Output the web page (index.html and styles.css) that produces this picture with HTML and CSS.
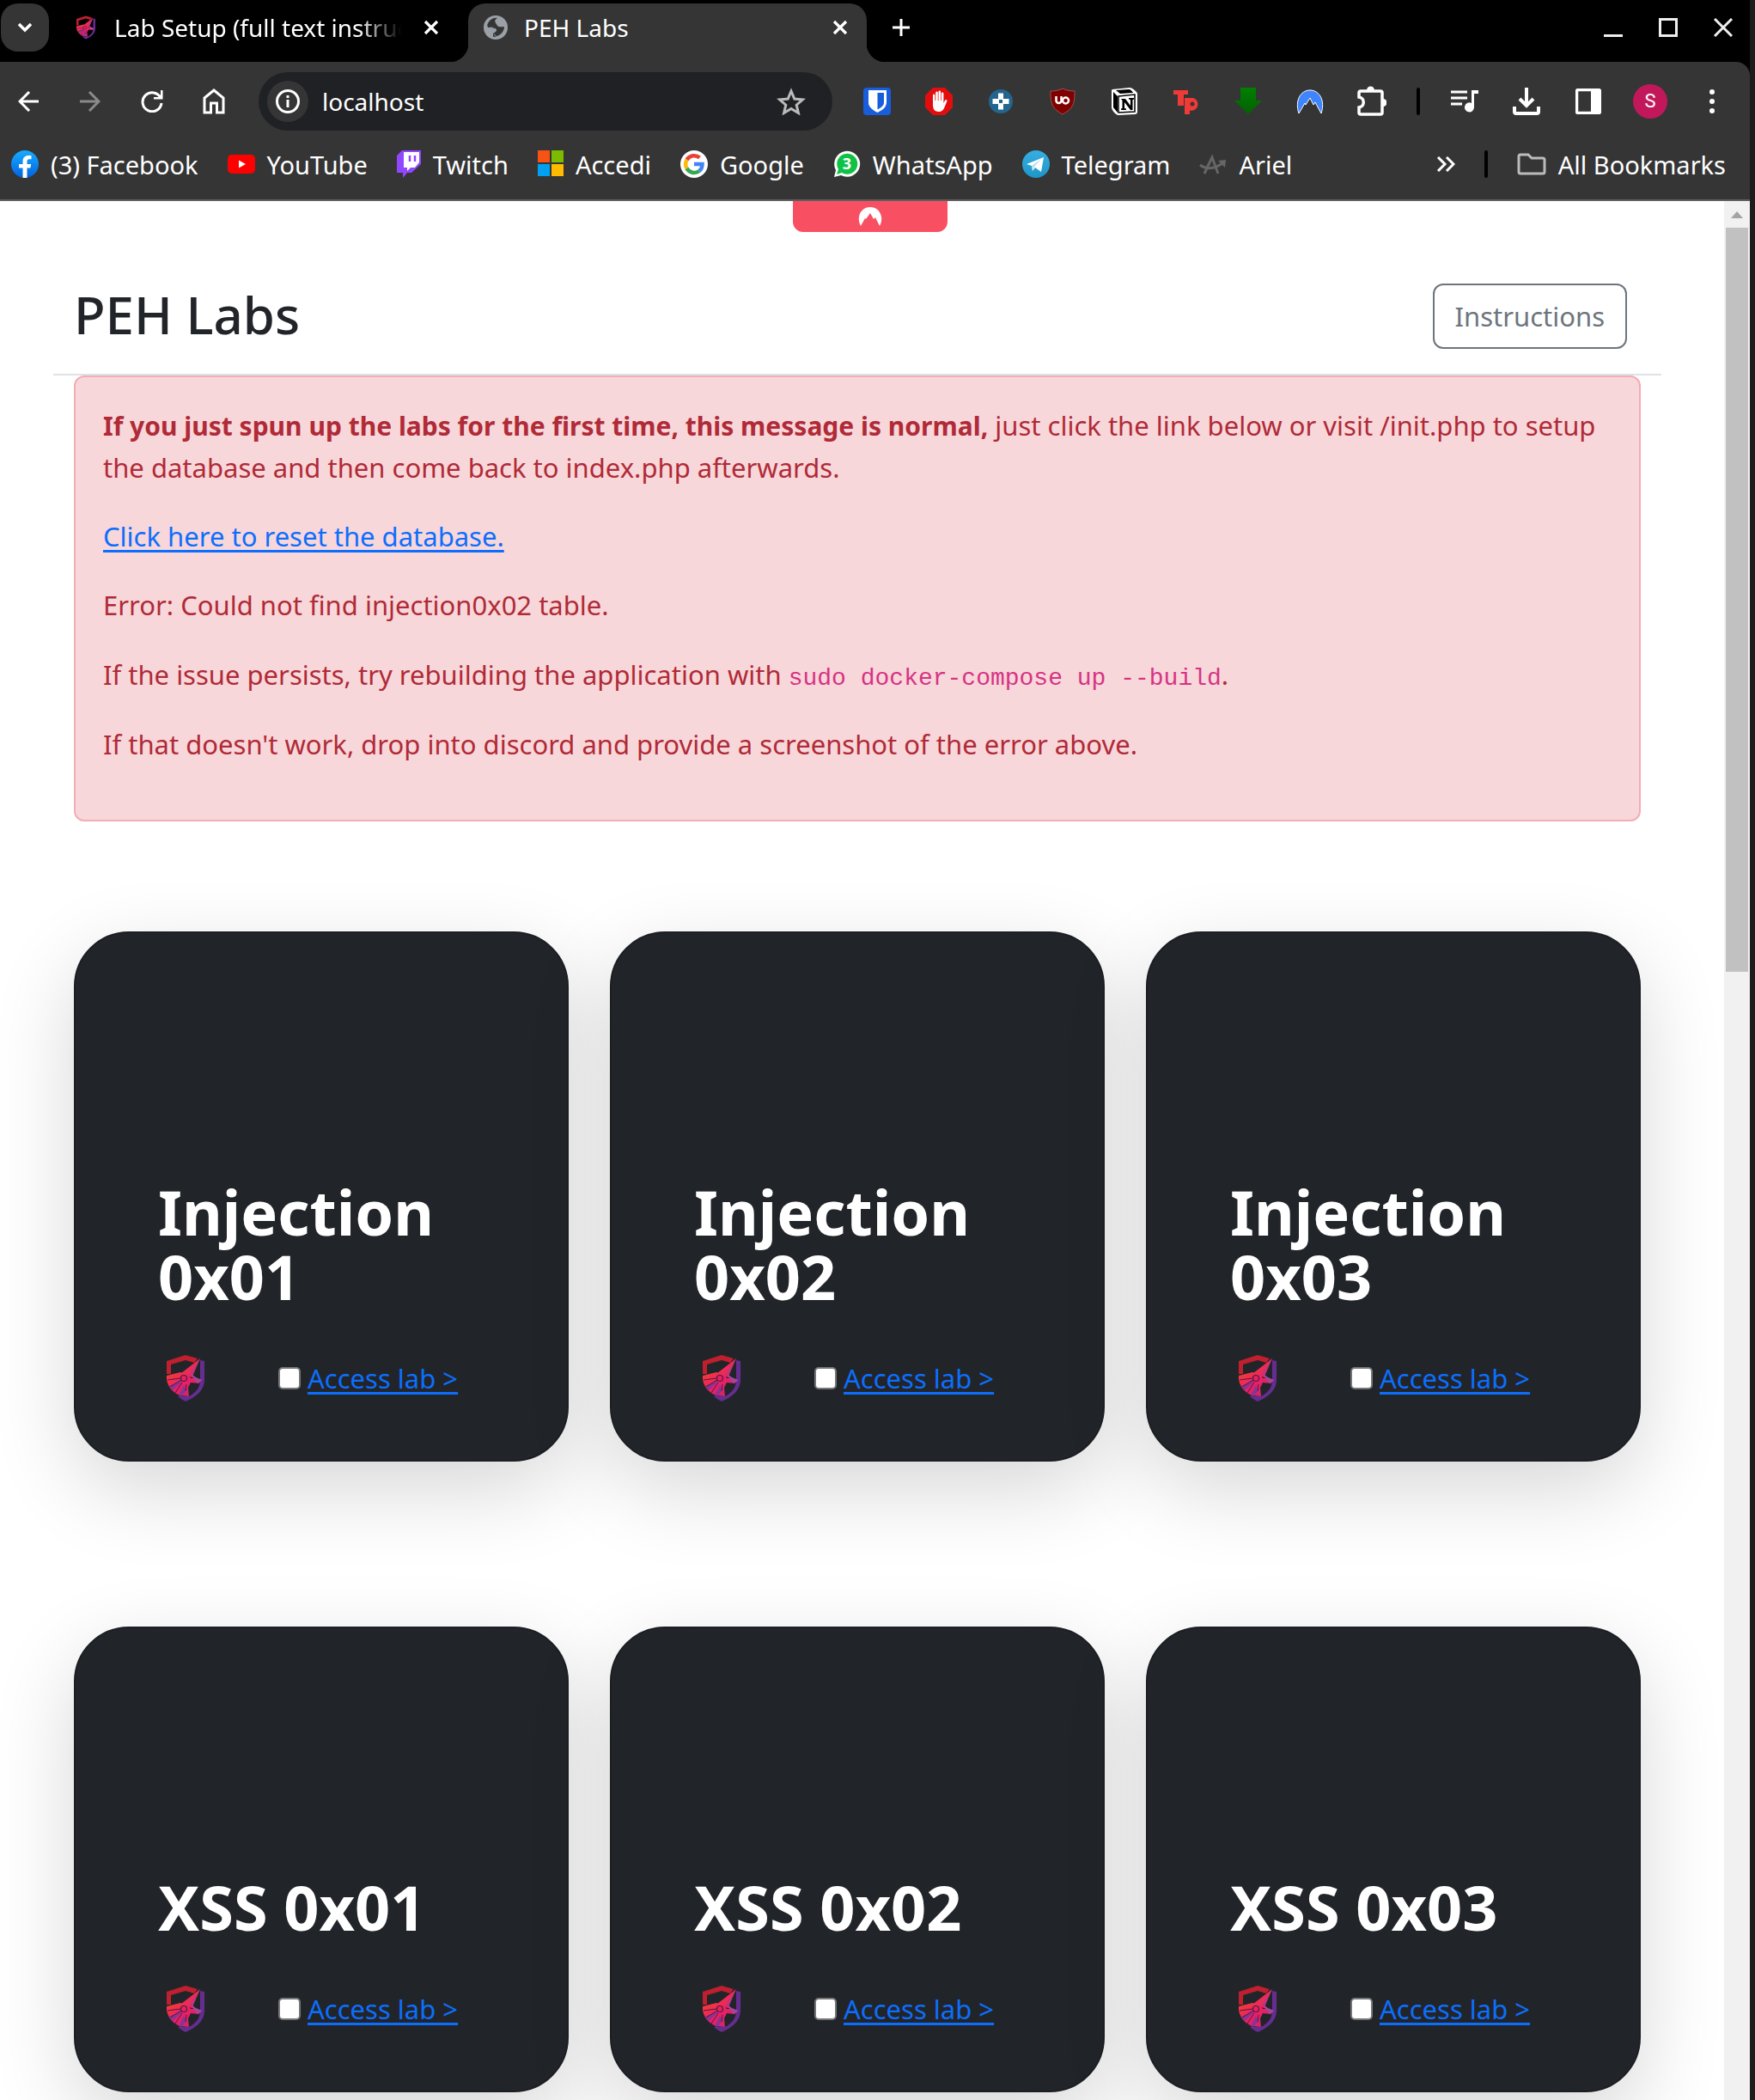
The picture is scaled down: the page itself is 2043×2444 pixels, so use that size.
FILE: index.html
```html
<!DOCTYPE html>
<html lang="en">
<head>
<meta charset="utf-8">
<title>PEH Labs</title>
<link rel="stylesheet" href="styles.css">
</head>
<body>
<svg class="defs" aria-hidden="true">
  <defs>
    <linearGradient id="head" x1="0" y1="0" x2="1" y2="1">
      <stop offset="0" stop-color="#f5402f"/><stop offset=".45" stop-color="#ec1f64"/><stop offset="1" stop-color="#c02a6b"/>
    </linearGradient>
    <linearGradient id="fb" x1="0" y1="0" x2="0" y2="1"><stop offset="0" stop-color="#18acfe"/><stop offset="1" stop-color="#0163e0"/></linearGradient>
    <linearGradient id="tg" x1="0" y1="0" x2="0" y2="1"><stop offset="0" stop-color="#37aee2"/><stop offset="1" stop-color="#1e96c8"/></linearGradient>
    <linearGradient id="dl" x1="0" y1="0" x2="0" y2="1"><stop offset="0" stop-color="#008000"/><stop offset="1" stop-color="#046004"/></linearGradient>
    <symbol id="shield" viewBox="0 0 44 54">
      <path d="M0 22V7L22 0l14 4-4 5-10-3L5 11v11z" fill="#c01f2e"/>
      <path d="M39 6l5 1v22c0 12-10 20-22 25-4-2-7-4-9-6l13 0c8-4 13-10 13-19z" fill="#662d91"/>
      <path d="M39 4L30 25l-4 0-6-3z" fill="#c2347a"/>
      <path d="M39 4L17 21l7 4z" fill="#ef2a55"/>
      <path d="M0 24l16-4 12 3 5 3 8 3-4 4-9-1-3 6 1 10-11-1C6 43 1 36 0 28z" fill="url(#head)"/>
      <path d="M30 23l4 3 7 3-4 4-7-7z" fill="#a0489c"/>
      <path d="M17 30L3 36l4 5 11-10zM20 35l-6 12 3 1 6-7z" fill="#8b3391"/>
      <path d="M1 29l15-2M4 37l13-8M10 44l8-12M22 42l1-8" stroke="#4a1c48" fill="none"/>
      <circle cx="20" cy="27" r="3.500" fill="#e5245c" stroke="#4a1c48" stroke-width="1.200"/>
      <path d="M27 25l5 2-4 0z" fill="#212429"/>
    </symbol>
    <symbol id="close" viewBox="0 0 18 18"><path d="M2 2l14 14M16 2L2 16" stroke="#fff" stroke-width="3.200"/></symbol>
  </defs>
</svg>
<div class="window">
  <div class="tabstrip">
    <button class="tab-search" aria-label="Search tabs"><svg width="20" height="14" viewBox="0 0 20 14"><path d="M3 3l7 7 7-7" fill="none" stroke="#fff" stroke-width="3.500"/></svg></button>
    <div class="tab">
      <svg class="favicon" width="22" height="28"><use href="#shield"/></svg>
      <span class="tab-title fade">Lab Setup (full text instructions)</span>
      <button class="plain" aria-label="Close tab"><svg width="18" height="18"><use href="#close"/></svg></button>
    </div>
    <div class="tab active">
      <svg class="globe" width="28" height="28" viewBox="0 0 28 28"><circle cx="14" cy="14" r="14" fill="#9aa0a6"/><path d="M16 3c-2 1-4 3-3 5s2 2 3 4c2 2 5 1 8 1 0 6-5 11-10 11 0-2-2-2-2-3 1-1 3-2 3-4-1-3-3-3-6-4-2 0-4 0-5-1 1-5 6-10 12-9z" fill="#353535"/><path d="M5 12c2-3 5-7 9-8-1 2-1 3 0 5 1 1 1 2 0 3-2 1-4 0-5 1 2 1 6 1 7 4 0 2-2 3-4 4 0 2 1 3 3 4-7 1-12-6-10-13z" fill="#353535"/><path d="M3 14c3 0 6-1 9 1 3 0 4 2 2 4l-3 2v4C6 24 2 19 3 14z" fill="#9aa0a6"/></svg>
      <span class="tab-title">PEH Labs</span>
      <button class="plain" aria-label="Close tab"><svg width="18" height="18"><use href="#close"/></svg></button>
    </div>
    <button class="plain new-tab" aria-label="New tab"><svg width="20" height="20" viewBox="0 0 20 20"><path d="M10 0v20M0 10h20" stroke="#fff" stroke-width="3"/></svg></button>
    <div class="controls">
      <button class="plain" aria-label="Minimize"><svg width="22" height="22" viewBox="0 0 22 22"><path d="M0 20.500h22" stroke="#eee" stroke-width="3"/></svg></button>
      <button class="plain" aria-label="Maximize"><svg width="22" height="22" viewBox="0 0 22 22"><path d="M1.500 1.500h19v19h-19z" fill="none" stroke="#eee" stroke-width="3"/></svg></button>
      <button class="plain" aria-label="Close"><svg width="22" height="22" viewBox="0 0 22 22"><path d="M1 1l20 20M21 1L1 21" stroke="#eee" stroke-width="3"/></svg></button>
    </div>
  </div>

  <div class="toolbar">
    <div class="slots">
      <button class="slot" aria-label="Back"><svg width="24" height="24" viewBox="0 0 24 24"><path d="M24 12H2M13 1L2 12l11 11" fill="none" stroke="#fff" stroke-width="3"/></svg></button>
      <button class="slot" aria-label="Forward"><svg width="24" height="24" viewBox="0 0 24 24"><path d="M0 12h22M11 1l11 11-11 11" fill="none" stroke="#8a8a8a" stroke-width="3"/></svg></button>
      <button class="slot" aria-label="Reload"><svg width="26" height="26" viewBox="0 0 26 26"><path d="M23 9A11 11 0 1 0 24 15" fill="none" stroke="#fff" stroke-width="3"/><path d="M25.500 0v10.500H15V8h6l2-3V0z" fill="#fff"/></svg></button>
      <button class="slot" aria-label="Home"><svg width="26" height="30" viewBox="0 0 26 30"><path d="M2 28V11l11-9 11 9v17h-7.500V17h-7v11z" fill="none" stroke="#fff" stroke-width="3"/></svg></button>
    </div>
    <div class="omnibox">
      <span class="info"><svg width="28" height="28" viewBox="0 0 28 28"><circle cx="14" cy="14" r="12.500" fill="none" stroke="#fff" stroke-width="3"/><path d="M14 12v9M14 7v3" stroke="#fff" stroke-width="3"/></svg></span>
      <input class="url" type="text" value="localhost" aria-label="Address">
      <button class="plain star" aria-label="Bookmark this tab"><svg width="34" height="32" viewBox="0 0 34 32"><path d="M17 4l3.800 9 9.700.9-7.300 6.300 2.200 9.300L17 24.500l-8.400 5 2.200-9.300L3.500 13.900l9.700-.9z" fill="none" stroke="#bbb" stroke-width="3"/></svg></button>
    </div>
    <div class="slots">
      <button class="slot" aria-label="Bitwarden"><svg width="32" height="32" viewBox="0 0 32 32"><rect width="32" height="32" rx="4" fill="#175ddc"/><path d="M6 3h21v14c0 6-5 9-10.500 12C11 26 6 23 6 17z" fill="#fff"/><path d="M16.500 6H24v11c0 4-3 6-7.500 8.500z" fill="#175ddc"/></svg></button>
      <button class="slot" aria-label="AdBlock"><svg width="32" height="32" viewBox="0 0 32 32"><path d="M9 0h14l9 9v14l-9 9H9l-9-9V9z" fill="#e40d0d"/><path d="M9 9c0-2 2.400-2 2.400 0v6h.8V6c0-2 2.600-2 2.600 0v9h.7V5c0-2 2.600-2 2.600 0v10h.7V7c0-2 2.600-2 2.600 0v11l1.600-3c1-2 3-1 2.300 1L22 24c-1 2-3 4-6 4-5 0-7-3-7-8z" fill="#fff"/></svg></button>
      <button class="slot" aria-label="Extension"><svg width="28" height="28" viewBox="0 0 28 28"><circle cx="14" cy="14" r="14" fill="#23658f"/><path d="M11 4.500h6V11h6.500v6H17v6.500h-6V17H4.500v-6H11z" fill="#fff"/><path d="M12 12h4v4h-4z" fill="#23658f"/></svg></button>
      <button class="slot" aria-label="uBlock Origin"><svg width="30" height="32" viewBox="0 0 30 32"><path d="M15 1c4 2 8 3 14 3 0 14-1 20-14 27C2 24 1 18 1 4c6 0 10-1 14-3z" fill="#800000" stroke="#a05050"/><path d="M7.500 10v5a3 3 0 0 0 6 0v-5" fill="none" stroke="#fff" stroke-width="2.500"/><circle cx="18.500" cy="15" r="3.500" fill="none" stroke="#fff" stroke-width="2.500"/></svg></button>
      <button class="slot" aria-label="Notion"><svg width="32" height="32" viewBox="0 0 32 32"><path d="M2 2l20-2c3 0 9 5 9 7v21c0 2-1 3-3 3L9 32c-3 0-8-6-8-9V4c0-1 0-2 1-2z" fill="#fff"/><path d="M3 5l5 5v19l-5-6zM6 3l15-1c2 0 4 2 5 4l-15 1z" fill="#000"/><path d="M9 10l19-2v20L9 29z" fill="#fff" stroke="#000" stroke-width="1.500"/><path d="M12 13h5l6 8v-7l-2-.5V12h6v1.500l-1.500.5v12H23l-7-9v7l2 .5V26h-6v-1.500l1.500-.5v-9z" fill="#000"/></svg></button>
      <button class="slot" aria-label="Tp"><svg width="32" height="32" viewBox="0 0 32 32"><path d="M1 3h17v5h-5v13H6V8H1z" fill="#f03a37"/><path d="M14 12h10a7.500 7.500 0 1 1-4 14.500V31h-6z" fill="#f03a37"/><circle cx="23" cy="19" r="2.500" fill="#353535"/></svg></button>
      <button class="slot" aria-label="Downloader"><svg width="32" height="32" viewBox="0 0 32 32"><path d="M7 0h18v15h7L16 31 0 15h7z" fill="url(#dl)"/></svg></button>
      <button class="slot" aria-label="NordVPN"><svg width="32" height="30" viewBox="0 0 32 30"><path d="M3 29C-2 14 5 2 16 2s18 12 13 27l-7-13-2 3-4-8-5 8-1-2z" fill="#3e85ff" stroke="#fff" stroke-width="1"/></svg></button>
      <button class="slot" aria-label="Extensions"><svg width="34" height="36" viewBox="0 0 34 36"><path d="M4 6h23q2 0 2 2v23q0 2-2 2H4q-2 0-2-2v-6c7-1 7-11 0-12V8q0-2 2-2z" fill="none" stroke="#fff" stroke-width="3.500"/><path d="M11 5a4.500 4.500 0 0 1 9 0zM30 15a4.500 4.500 0 0 1 0 9z" fill="#fff"/></svg></button>
    </div>
    <span class="bar"></span>
    <div class="slots">
      <button class="slot" aria-label="Media"><svg width="32" height="26" viewBox="0 0 32 26"><path d="M0 2h19M0 9h19M0 16h13" stroke="#fff" stroke-width="3"/><path d="M32 0v4h-5v16a5.500 5.500 0 1 1-3-5V0z" fill="#fff"/></svg></button>
      <button class="slot" aria-label="Downloads"><svg width="32" height="32" viewBox="0 0 32 32"><path d="M16 0v20M8 13l8 8 8-8" fill="none" stroke="#fff" stroke-width="4"/><path d="M2 22v6q0 2 2 2h24q2 0 2-2v-6" fill="none" stroke="#fff" stroke-width="4"/></svg></button>
      <button class="slot" aria-label="Side panel"><svg width="30" height="30" viewBox="0 0 30 30"><rect x="1.500" y="1.500" width="27" height="27" rx="2" fill="none" stroke="#fff" stroke-width="3.500"/><path d="M18 1h11v28H18z" fill="#fff"/></svg></button>
      <button class="slot" aria-label="Profile"><span class="avatar">S</span></button>
      <button class="slot" aria-label="Menu"><svg width="8" height="28" viewBox="0 0 8 28"><circle cx="4" cy="3" r="3" fill="#fff"/><circle cx="4" cy="14" r="3" fill="#fff"/><circle cx="4" cy="25" r="3" fill="#fff"/></svg></button>
    </div>
  </div>

  <nav class="bookmarks">
    <a href="#"><svg width="32" height="32" viewBox="0 0 32 32"><circle cx="16" cy="16" r="16" fill="url(#fb)"/><path d="M13.500 32V20.500H9V16h4.500v-3c0-5 3-7 6.500-7 1.500 0 2.500.2 3.500.3v4H21c-2 0-2.500 1-2.500 2.700v3h4.700l-.8 4.500h-3.900V32z" fill="#fff"/></svg>(3) Facebook</a>
    <a href="#"><svg width="32" height="32" viewBox="0 0 32 32"><rect y="5" width="32" height="22" rx="5" fill="#f00"/><path d="M13 11.500l8 4.500-8 4.500z" fill="#fff"/></svg>YouTube</a>
    <a href="#"><svg width="28" height="32" viewBox="2 0 28 32"><path d="M2 6l6-6h22v16L19 26h-5l-5 6v-6H2z" fill="#9146ff"/><path d="M10 2h18v12l-5 6h-5l-4 4v-4h-4z" fill="#fff"/><path d="M17 6v7M23 6v7" stroke="#9146ff" stroke-width="2.500"/></svg>Twitch</a>
    <a href="#"><svg width="30" height="32" viewBox="1 0 30 32"><path d="M1 0h14v14H1z" fill="#f65314"/><path d="M17 0h14v14H17z" fill="#7cbb00"/><path d="M1 16h14v14H1z" fill="#00a1f1"/><path d="M17 16h14v14H17z" fill="#fb0"/></svg>Accedi</a>
    <a href="#"><svg width="32" height="32" viewBox="0 0 32 32"><circle cx="16" cy="16" r="16" fill="#fff"/><g fill="none" stroke-width="4.500"><path d="M22.500 8.500A10 10 0 0 0 7.500 11" stroke="#ea4335"/><path d="M7.500 11a10 10 0 0 0 0 10" stroke="#fbbc05"/><path d="M7.500 21a10 10 0 0 0 14.500 3" stroke="#34a853"/><path d="M16 16h9.500c0 3-1 6-3.500 8" stroke="#4285f4"/></g></svg>Google</a>
    <a href="#"><svg width="32" height="32" viewBox="0 0 32 32"><path d="M1 31l2-8A15 15 0 1 1 9 29z" fill="#fff"/><path d="M4 28l2-6a12 12 0 1 1 4 4z" fill="#0fc144"/><text x="16" y="22" class="badge" text-anchor="middle">3</text></svg>WhatsApp</a>
    <a href="#"><svg width="32" height="32" viewBox="0 0 32 32"><circle cx="16" cy="16" r="16" fill="url(#tg)"/><path d="M5 16L25 8l-3 17-7-5-3 4-1-6z" fill="#fff"/><path d="M11 18l11-8-8 9-2 4z" fill="#b8dcf0"/></svg>Telegram</a>
    <a href="#"><svg width="32" height="32" viewBox="0 0 32 32"><path d="M6 27l9-19 7 19M1 17c8 6 18 4 26-2" fill="none" stroke="#666" stroke-width="3"/><path d="M22 12l9-1-1 9z" fill="#666"/></svg>Ariel</a>
    <button class="plain more" aria-label="More bookmarks"><svg width="22" height="18" viewBox="0 0 22 18"><path d="M2 1l8 8-8 8M12 1l8 8-8 8" fill="none" stroke="#fff" stroke-width="3"/></svg></button>
    <span class="bar"></span>
    <a href="#"><svg width="34" height="32" viewBox="0 0 34 32"><path d="M4 5h9l4 4h13q2 0 2 2v14q0 2-2 2H4q-2 0-2-2V7q0-2 2-2z" fill="none" stroke="#bbb" stroke-width="3"/></svg>All Bookmarks</a>
  </nav>

  <div class="viewport">
    <div class="page">
      <span class="nord"><svg width="28" height="22" viewBox="0 0 28 22"><path d="M3 22C-3 11 4 0 14 0s17 11 11 22l-5-10-2 2-4-7-5 7-1-1z" fill="#fff"/></svg></span>
      <header class="head">
        <h1>PEH Labs</h1>
        <button class="instructions">Instructions</button>
      </header>
      <div class="content">
        <div class="alert" role="alert">
          <p><strong>If you just spun up the labs for the first time, this message is normal,</strong> just click the link below or visit /init.php to setup the database and then come back to index.php afterwards.</p>
          <p><a href="#">Click here to reset the database.</a></p>
          <p>Error: Could not find injection0x02 table.</p>
          <p class="rebuild">If the issue persists, try rebuilding the application with <code>sudo docker-compose up --build</code>.</p>
          <p>If that doesn't work, drop into discord and provide a screenshot of the error above.</p>
        </div>
        <div class="cards">
          <article class="card"><h2>Injection<br>0x01</h2><div class="foot"><svg width="44" height="54"><use href="#shield"/></svg><input type="checkbox" aria-label="Injection 0x01 done"><a href="#">Access lab &gt;</a></div></article>
          <article class="card"><h2>Injection<br>0x02</h2><div class="foot"><svg width="44" height="54"><use href="#shield"/></svg><input type="checkbox" aria-label="Injection 0x02 done"><a href="#">Access lab &gt;</a></div></article>
          <article class="card"><h2>Injection<br>0x03</h2><div class="foot"><svg width="44" height="54"><use href="#shield"/></svg><input type="checkbox" aria-label="Injection 0x03 done"><a href="#">Access lab &gt;</a></div></article>
          <article class="card"><h2>XSS 0x01</h2><div class="foot"><svg width="44" height="54"><use href="#shield"/></svg><input type="checkbox" aria-label="XSS 0x01 done"><a href="#">Access lab &gt;</a></div></article>
          <article class="card"><h2>XSS 0x02</h2><div class="foot"><svg width="44" height="54"><use href="#shield"/></svg><input type="checkbox" aria-label="XSS 0x02 done"><a href="#">Access lab &gt;</a></div></article>
          <article class="card"><h2>XSS 0x03</h2><div class="foot"><svg width="44" height="54"><use href="#shield"/></svg><input type="checkbox" aria-label="XSS 0x03 done"><a href="#">Access lab &gt;</a></div></article>
        </div>
      </div>
    </div>
    <div class="scrollbar">
      <svg width="14" height="8" viewBox="0 0 14 8"><path d="M0 8l7-8 7 8z" fill="#a3a3a3"/></svg>
      <span class="thumb"></span>
    </div>
  </div>
</div>
</body>
</html>
```
FILE: styles.css
```css
* { box-sizing: border-box; }

body {
  margin: 0;
  padding-right: 6px;
  background: #1c1c1c;
  font-family: "Noto Sans", "Open Sans", sans-serif;
  font-size: 31px;
}

svg { display: block; flex: none; }
button, input { font: inherit; margin: 0; }
.defs { position: absolute; width: 0; height: 0; }
.window { background: #000; min-height: 100vh; }

.plain, .slot {
  display: flex;
  align-items: center;
  justify-content: center;
  padding: 0;
  border: 0;
  background: none;
}

/* Tab strip */
.tabstrip {
  display: flex;
  align-items: flex-start;
  height: 72px;
  padding: 4px 20px 0 1px;
  color: #fff;
  font-size: 28px;
}
.tab-search {
  display: flex;
  align-items: center;
  justify-content: center;
  flex: none;
  width: 56px;
  height: 56px;
  padding: 0;
  border: 0;
  border-radius: 20px;
  background: #353535;
}
.tab {
  display: flex;
  align-items: center;
  flex: none;
  width: 464px;
  height: 68px;
  padding: 0 22px 12px 18px;
}
.tab-search + .tab { width: 488px; padding: 0 34px 12px 32px; }
.favicon { margin-right: 22px; }
.globe { margin-right: 19px; }
.tab-title { flex: 1; white-space: nowrap; overflow: hidden; }
.fade { margin-right: 26px; mask-image: linear-gradient(to right, #000 85%, transparent); }
.active {
  position: relative;
  border-radius: 20px 20px 0 0;
  background: #353535;
}
.active::before, .active::after {
  content: "";
  position: absolute;
  bottom: 0;
  width: 22px;
  height: 22px;
}
.active::before { right: 100%; background: radial-gradient(circle at 0 0, #000 22px, #353535 23px); }
.active::after { left: 100%; background: radial-gradient(circle at 100% 0, #000 22px, #353535 23px); }
.new-tab { width: 80px; height: 56px; }
.controls { display: flex; align-items: center; gap: 42px; height: 56px; margin-left: auto; }

/* Toolbar */
.toolbar {
  display: flex;
  align-items: center;
  height: 92px;
  padding-right: 8px;
  border-top-right-radius: 16px;
  background: #353535;
}
.slots { display: flex; }
.slot { width: 72px; height: 68px; }
.slots:first-child { margin-left: -3px; }
.omnibox {
  display: flex;
  align-items: center;
  flex: 1;
  height: 68px;
  margin: 0 16px;
  padding: 0 31px 0 10px;
  border-radius: 34px;
  background: #202124;
}
.info {
  display: flex;
  align-items: center;
  justify-content: center;
  width: 48px;
  height: 48px;
  border-radius: 50%;
  background: #353535;
}
.url {
  flex: 1;
  min-width: 0;
  padding: 0 0 0 16px;
  border: 0;
  background: none;
  color: #fff;
  font-size: 28px;
}
.bar { flex: none; width: 4px; height: 32px; border-radius: 2px; background: #000; }
.toolbar > .bar { margin: 0 16px; }
.avatar {
  width: 40px;
  border-radius: 50%;
  background: #c2185b;
  color: #fff;
  font: 22px/40px Roboto, sans-serif;
}

/* Bookmarks bar */
.bookmarks {
  display: flex;
  align-items: center;
  gap: 34px;
  height: 70px;
  padding: 0 28px 14px 13px;
  border-bottom: 2px solid #5f5f5f;
  background: #353535;
  font-size: 29px;
}
.bookmarks a {
  display: flex;
  align-items: center;
  gap: 14px;
  color: #fff;
  text-decoration: none;
  white-space: nowrap;
}
.more { margin-left: auto; }
.badge { fill: #fff; font: bold 18px "Noto Sans", sans-serif; }

/* Page */
.viewport { display: flex; background: #fff; }
.page { position: relative; flex: 1; padding: 80px 73px 9px 62px; overflow: hidden; }
.nord {
  position: absolute;
  top: 0;
  left: 46%;
  display: flex;
  justify-content: center;
  width: 180px;
  height: 36px;
  padding-top: 7px;
  border-radius: 0 0 12px 12px;
  background: #f94f63;
}
.head {
  display: flex;
  align-items: center;
  justify-content: space-between;
  height: 123px;
  padding: 0 40px 13px 24px;
  border-bottom: 2px solid #dee2e6;
}
h1 { margin: 0; padding-bottom: 4px; color: #212529; font-size: 60px; font-weight: 500; line-height: 76px; }
.instructions {
  height: 76px;
  padding: 0 24px;
  border: 2px solid #6c757d;
  border-radius: 12px;
  background: #fff;
  color: #6c757d;
}
.content { padding: 0 24px; }
.alert {
  padding: 32px;
  border: 2px solid #f1aeb5;
  border-radius: 12px;
  background: #f8d7da;
  color: #b02a37;
  line-height: 48px;
}
.alert p { margin: 0 0 32px; }
.alert strong { font-size: 30px; }
.alert .rebuild { line-height: 50px; }
.alert a, .foot a { color: #0d6efd; text-decoration-thickness: 3px; text-underline-offset: 4px; }
code { color: #d63384; font: 28px "Liberation Mono", monospace; }
.cards {
  display: grid;
  grid-template-columns: repeat(3, 1fr);
  gap: 192px 48px;
  padding-top: 128px;
}
.card {
  padding: 287px 96px 64px;
  border: 2px solid #1b1e22;
  border-radius: 64px;
  background: #212529;
  box-shadow: 0 32px 96px rgba(0, 0, 0, .16);
}
h2 { margin: 0 0 49px; color: #fff; font-size: 72px; font-weight: 700; line-height: 75px; white-space: nowrap; }
.foot { display: flex; align-items: center; height: 63px; padding-left: 10px; white-space: nowrap; }
.foot input {
  appearance: none;
  flex: none;
  width: 26px;
  height: 26px;
  margin: 0 8px 0 86px;
  border: 2px solid #767676;
  border-radius: 5px;
  background: #fff;
}

/* Scrollbar */
.scrollbar {
  display: flex;
  flex-direction: column;
  align-items: center;
  gap: 11px;
  width: 30px;
  padding-top: 12px;
  background: #f1f1f1;
}
.thumb { width: 26px; height: 866px; background: #c1c1c1; }
```
